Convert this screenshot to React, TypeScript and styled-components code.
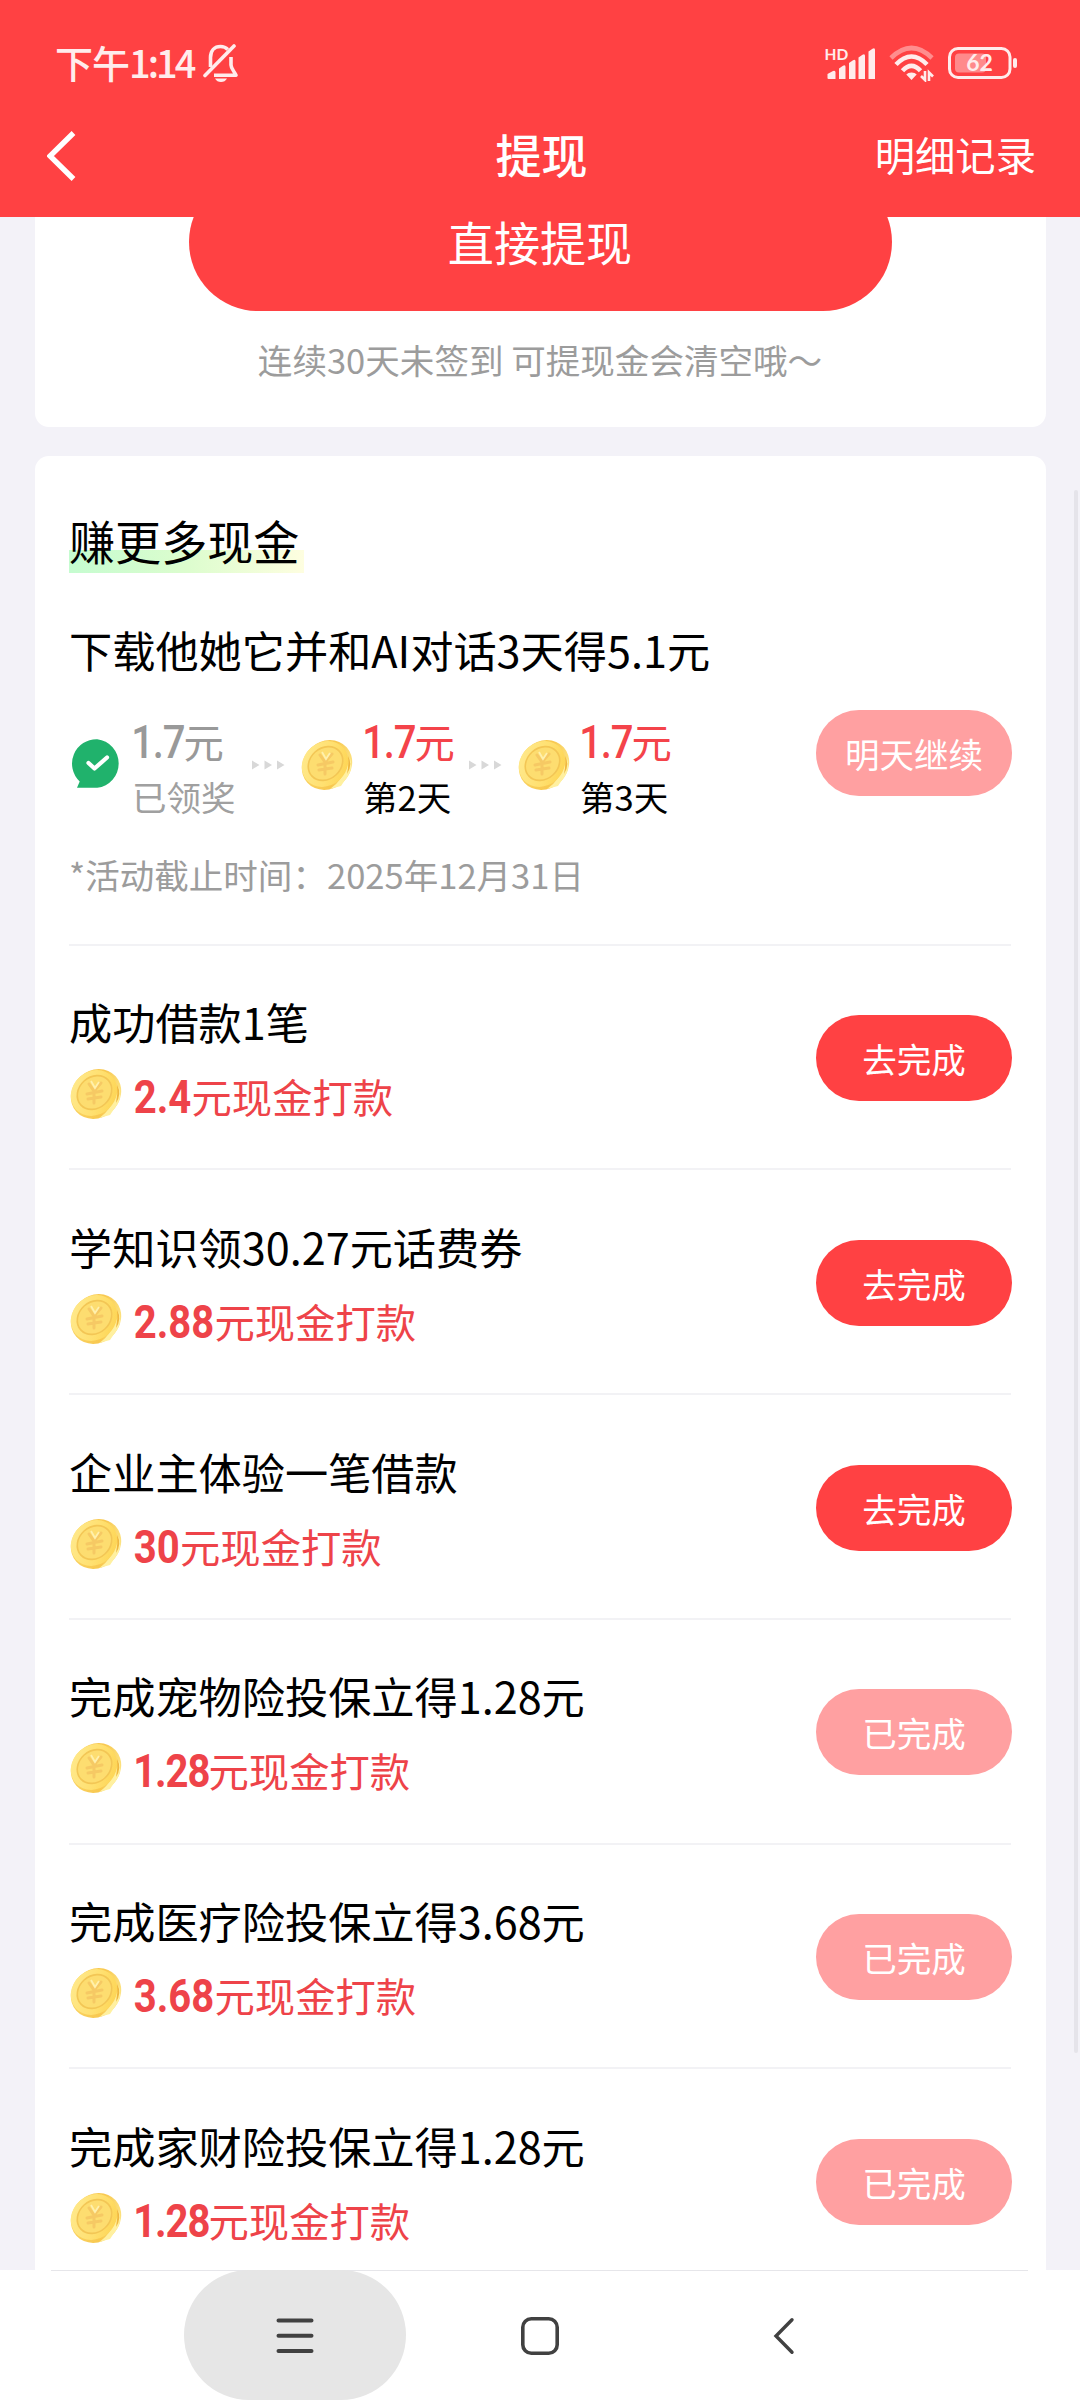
import React from "react";
import styled, { createGlobalStyle } from "styled-components";

const RED = "#ff4143";
const CJK = `"Noto Sans CJK SC", "Noto Sans", sans-serif`;

const GlobalStyle = createGlobalStyle`
  * { box-sizing: border-box; }
  html, body { margin: 0; padding: 0; }
  body { font-family: ${CJK}; color: #000; }
`;

const Screen = styled.div`
  width: 1080px;
  height: 2400px;
  display: flex;
  flex-direction: column;
  overflow: hidden;
  background: #f3f2f8;
`;

const Header = styled.header`
  height: 217px;
  flex: none;
  background: ${RED};
  color: #fff;
`;

const StatusBar = styled.div`
  height: 96px;
  padding: 30px 62px 0 55px;
  display: flex;
  align-items: center;
  justify-content: space-between;
  color: #ffecec;
`;

const StatusGroup = styled.div<{ $gap: number }>`
  display: flex;
  align-items: center;
  gap: ${(p) => p.$gap}px;
`;

const Clock = styled.span`
  padding-bottom: 3px;
  font-size: 38px;
  line-height: 40px;
  font-weight: 500;
  letter-spacing: -1px;
`;

const ClockDigits = styled.span`
  letter-spacing: -3px;
`;

const NavBar = styled.div`
  height: 121px;
  padding: 0 44px 0 47px;
  display: grid;
  grid-template-columns: 1fr auto 1fr;
  align-items: center;
`;

const BackIcon = styled.svg`
  display: block;
  width: 30px;
  height: 52px;
`;

const PageTitle = styled.h1`
  margin: 0;
  padding-bottom: 7px;
  font-size: 46px;
  line-height: 60px;
  font-weight: 500;
`;

const HeaderLink = styled.span`
  justify-self: end;
  padding-bottom: 6px;
  font-size: 40.32px;
  line-height: 60px;
`;

const Content = styled.main`
  position: relative;
  flex: 1;
  min-height: 0;
  overflow: hidden;
  padding: 0 34.5px;
  display: flex;
  flex-direction: column;
  gap: 29px;
`;

const WithdrawCard = styled.section`
  flex: none;
  height: 210px;
  background: #fff;
  border-radius: 0 0 14px 14px;
  display: flex;
  flex-direction: column;
  align-items: center;
`;

const WithdrawButton = styled.button`
  flex: none;
  width: 703px;
  height: 138px;
  margin-top: -44px;
  border: 0;
  border-radius: 69px;
  padding: 0 0 2px;
  background: ${RED};
  color: #fff;
  font-family: inherit;
  font-size: 46.08px;
  line-height: 48px;
`;

const Notice = styled.p`
  margin: 23px 0 0;
  font-size: 34.56px;
  line-height: 50px;
  color: #9c9c9c;
`;

const TaskCard = styled.section`
  flex: none;
  height: 1900px;
  padding: 57px 34.5px 0;
  background: #fff;
  border-radius: 14px 14px 0 0;
`;

const SectionTitle = styled.h2`
  margin: 0;
  width: 235px;
  height: 60px;
  font-size: 46.08px;
  line-height: 54px;
  font-weight: 400;
  background: linear-gradient(90deg, #c5fcd0, #dcfdce 50%, #fefee0) no-repeat 0 100% / 235px 23px;
`;

const FeaturedTask = styled.div`
  height: 372.5px;
  padding-top: 46px;
  border-bottom: 2px solid #f2f2f5;
`;

const TaskTitle = styled.h3`
  margin: 0;
  font-size: 43.2px;
  line-height: 60px;
  font-weight: 400;
`;

const StepLine = styled.div`
  display: flex;
  justify-content: space-between;
  margin-top: 31px;
`;

const Steps = styled.div`
  display: flex;
  align-items: flex-start;
`;

const Step = styled.div<{ $width: number }>`
  display: grid;
  grid-template-columns: 52px auto;
  column-gap: 12px;
  width: ${(p) => p.$width}px;
  & + svg + & {
    margin-left: 15px;
  }
`;

const IconSlot = styled.div`
  padding-top: 27px;
`;

const StepAmount = styled.div<{ $claimed?: boolean }>`
  display: flex;
  align-items: baseline;
  height: 56px;
  margin-top: 3px;
  line-height: 56px;
  font-size: 40.32px;
  color: ${(p) => (p.$claimed ? "#999" : "#f4434a")};
`;

const StepLabel = styled.div<{ $claimed?: boolean }>`
  margin: 2px 0 0 -1px;
  font-size: 34.56px;
  line-height: 50px;
  white-space: nowrap;
  color: ${(p) => (p.$claimed ? "#a0a0a0" : "#000")};
`;

const Arrows = styled.svg`
  width: 34px;
  height: 10px;
  margin: 50px 0 0;
`;

const Deadline = styled.p`
  margin: 28px 0 0;
  font-size: 34.56px;
  line-height: 50px;
  color: #9c9c9c;
`;

const TaskRow = styled.div`
  height: 224.75px;
  display: flex;
  justify-content: space-between;
  border-bottom: 2px solid #f2f2f5;
`;

const TaskInfo = styled.div`
  padding-top: 45.5px;
`;

const Reward = styled.div`
  display: flex;
  height: 60px;
  margin-top: 15px;
  line-height: 60px;
  font-size: 40.32px;
  color: #ee4349;
`;

const RewardText = styled.div`
  display: flex;
  align-items: baseline;
  margin-left: 12px;
`;

const Coin = styled.svg`
  display: block;
  flex: none;
  width: 54px;
  height: 54px;
`;

const Digits = styled.span<{ $width: number; $shift: number; $tracking: number; $weight: number }>`
  display: block;
  width: ${(p) => p.$width}px;
  text-indent: ${(p) => p.$shift}px;
  letter-spacing: ${(p) => p.$tracking}px;
  white-space: nowrap;
  font-family: Roboto, "Liberation Sans", sans-serif;
  font-size: 46px;
  font-weight: ${(p) => p.$weight};
  transform: scaleX(0.87);
  transform-origin: 0 50%;
`;

const ActionButton = styled.button<{ $muted?: boolean; $top: number }>`
  flex: none;
  width: 196px;
  height: 86px;
  margin: ${(p) => p.$top}px -1px 0 0;
  padding: 0;
  border: 0;
  border-radius: 43px;
  background: ${(p) => (p.$muted ? "#ffa0a1" : RED)};
  color: #fff;
  font-family: inherit;
  font-size: 34.56px;
`;

const ScrollThumb = styled.div`
  position: absolute;
  top: 273px;
  right: 2px;
  width: 4px;
  height: 1563px;
  border-radius: 2px;
  background: #e5e4ea;
`;

const SystemNav = styled.nav`
  flex: none;
  height: 130px;
  padding: 0 173px;
  background: #fff linear-gradient(#e6e6ea, #e6e6ea) no-repeat 51px 0 / 977px 1px;
  display: grid;
  grid-template-columns: repeat(3, 244.4px);
  justify-items: center;
`;

const NavKey = styled.div<{ $active?: boolean }>`
  width: 222px;
  height: 130px;
  border-radius: 65px;
  padding-top: 1px;
  background: ${(p) => (p.$active ? "#e6e6e6" : "transparent")};
  display: flex;
  align-items: center;
  justify-content: center;
`;

function Amount({ value, weight = 700 }: { value: string; weight?: number }) {
  const digits = value.replace(".", "").length;
  const startsWithOne = value.startsWith("1");
  const width = digits * 23 + (value.includes(".") ? 11.5 : 0) - 1 - (startsWithOne ? 6 : 0);
  return (
    <Digits
      $width={width}
      $shift={startsWithOne ? -2 : -1.5}
      $tracking={startsWithOne ? -1.3 : 0}
      $weight={weight}
    >
      {value}
    </Digits>
  );
}

function CoinIcon() {
  return (
    <Coin viewBox="0 -1 54 54">
      <defs>
        <linearGradient id="coinFace" x1="0.1" y1="0.1" x2="0.8" y2="1">
          <stop offset="0" stopColor="#ffe98c" />
          <stop offset="0.55" stopColor="#ffe070" />
          <stop offset="1" stopColor="#fdd452" />
        </linearGradient>
        <linearGradient id="coinEdge" x1="0" y1="0" x2="1" y2="1">
          <stop offset="0" stopColor="#fbd768" />
          <stop offset="0.6" stopColor="#f8c850" />
          <stop offset="1" stopColor="#fff09a" />
        </linearGradient>
      </defs>
      <ellipse cx="27" cy="27" rx="26.500" ry="23.500" transform="rotate(-42 27 27)" fill="url(#coinEdge)" />
      <path d="M50 20 Q54 32 45 42 L41 48 L30 51 Q44 42 50 20Z" fill="#fff0a0" />
      <path d="M48 18 Q53 27 47 36 Q49 27 48 18Z" fill="#f0b840" />
      <ellipse cx="25" cy="26" rx="24.500" ry="21.500" transform="rotate(-42 25 26)" fill="url(#coinFace)" />
      <ellipse cx="25.500" cy="25.500" rx="18.500" ry="15.500" transform="rotate(-42 25.5 25.5)" fill="#fddd70" stroke="#f3c655" strokeWidth="1.600" />
      <path d="M20 17 L25 24 L32 16 M25 24 L25 36 M18 27 L33 24 M19 32 L32 30" stroke="#f6c964" strokeWidth="3" strokeLinecap="round" fill="none" />
      <path d="M22 14 L26 21 L30 15" stroke="#fff0ad" strokeWidth="1.800" fill="none" />
    </Coin>
  );
}

function ClaimedIcon() {
  return (
    <Coin viewBox="-1 -0.5 54 54">
      <path d="M27.300 1.700 A24.500 24.500 0 0 1 27.300 50.300 H7 L9.700 44 A24.500 24.500 0 0 1 27.300 1.700Z" fill="#20b26c" />
      <path d="M18.500 25.500 L24.500 31 L37 20" fill="none" stroke="#fff" strokeWidth="4.200" strokeLinecap="round" strokeLinejoin="round" />
    </Coin>
  );
}

function ArrowTrail() {
  return (
    <Arrows viewBox="0 0 34 10">
      <path d="M1 0.500 L8.500 5 L1 9.500Z M13.500 0.500 L21 5 L13.500 9.500Z M26 0.500 L33.500 5 L26 9.500Z" fill="#d8d8d8" />
    </Arrows>
  );
}

function MutedBell() {
  return (
    <svg width="36" height="40" viewBox="0 0 36 40" fill="none" stroke="currentColor" strokeWidth="3.600">
      <path d="M7.500 24 V14.500 C7.500 7.500 11.500 3.500 17.500 3.500 C20.500 3.500 23 4.600 24.800 6.500" />
      <path d="M28 14 V22 C28 25.500 31 28 33 32.200 H11" strokeLinejoin="round" />
      <path d="M2 32.500 L31 3" strokeLinecap="round" />
      <path d="M12 35.500 H24 Q22 39 18 39 Q14 39 12 35.500Z" fill="currentColor" stroke="none" />
    </svg>
  );
}

function Signal() {
  return (
    <svg width="52" height="36" viewBox="0 0 52 36" fill="currentColor" overflow="visible">
      <text x="-0.500" y="14.500" fontFamily="Lato, sans-serif" fontSize="15.500" fontWeight="700">HD</text>
      <path d="M2.500 29 L8 26 Q10.500 25 10.500 27.500 V34 H3.500 Q2.500 34 2.500 33Z" />
      <path d="M14 23.500 L18 20.800 Q20.500 19.500 20.500 22 V34 H14Z" />
      <path d="M24 18 L28 15.300 Q30.500 14 30.500 16.500 V34 H24Z" />
      <path d="M33.500 12.500 L37.500 9.800 Q40 8.500 40 11 V34 H33.500Z" />
      <path d="M43.500 6.500 L47.500 3.800 Q50 2.500 50 5 V34 H43.500Z" />
    </svg>
  );
}

function Wifi() {
  return (
    <svg width="47" height="38" viewBox="0 0 47 38" fill="none" stroke="currentColor" strokeWidth="4.600">
      <path d="M2 14 Q22.500 -6 43 14" opacity="0.450" />
      <path d="M7 20.500 Q22.500 4.500 38 20.500" />
      <path d="M13.500 26.800 Q22.500 17 31.500 26.800" />
      <path d="M22.500 28.500 Q26 28.500 27.700 30.500 L22.500 36 L17.300 30.500 Q19 28.500 22.500 28.500Z" fill="currentColor" stroke="none" />
      <path d="M36 27 V36 L32 32 M40 37 V28.500 L44 32.500" strokeWidth="2.600" />
    </svg>
  );
}

function Battery() {
  return (
    <svg width="70" height="32" viewBox="0 0 70 32">
      <rect x="1.500" y="1.500" width="60.500" height="29" rx="8.500" fill="none" stroke="currentColor" strokeWidth="3" />
      <rect x="7" y="6.500" width="31" height="19" rx="4" fill="#ff8a8b" />
      <rect x="65" y="11" width="4" height="10" rx="2" fill="currentColor" />
      <text x="31.500" y="24" textAnchor="middle" fontFamily="Lato, sans-serif" fontSize="23" fontWeight="700" fill="currentColor">62</text>
    </svg>
  );
}

const steps = [
  { amount: "1.7", label: "已领奖", claimed: true, width: 182 },
  { amount: "1.7", label: "第2天", claimed: false, width: 168 },
  { amount: "1.7", label: "第3天", claimed: false, width: 160 },
];

const tasks = [
  { title: "成功借款1笔", amount: "2.4", done: false },
  { title: "学知识领30.27元话费券", amount: "2.88", done: false },
  { title: "企业主体验一笔借款", amount: "30", done: false },
  { title: "完成宠物险投保立得1.28元", amount: "1.28", done: true },
  { title: "完成医疗险投保立得3.68元", amount: "3.68", done: true },
  { title: "完成家财险投保立得1.28元", amount: "1.28", done: true },
];

export default function App() {
  return (
    <Screen>
      <GlobalStyle />
      <Header>
        <StatusBar>
          <StatusGroup $gap={10}>
            <Clock>下午<ClockDigits>1:14</ClockDigits></Clock>
            <MutedBell />
          </StatusGroup>
          <StatusGroup $gap={12}>
            <Signal />
            <Wifi />
            <Battery />
          </StatusGroup>
        </StatusBar>
        <NavBar>
          <BackIcon viewBox="0 0 30 52">
            <path d="M26.500 2 L3 25 L26.500 48" fill="none" stroke="#fff" strokeWidth="5.400" />
          </BackIcon>
          <PageTitle>提现</PageTitle>
          <HeaderLink>明细记录</HeaderLink>
        </NavBar>
      </Header>

      <Content>
        <WithdrawCard>
          <WithdrawButton>直接提现</WithdrawButton>
          <Notice>连续30天未签到 可提现金会清空哦～</Notice>
        </WithdrawCard>

        <TaskCard>
          <SectionTitle>赚更多现金</SectionTitle>
          <FeaturedTask>
            <TaskTitle>下载他她它并和AI对话3天得5.1元</TaskTitle>
            <StepLine>
              <Steps>
                {steps.map((step, i) => (
                  <React.Fragment key={step.label}>
                    {i > 0 && <ArrowTrail />}
                    <Step $width={step.width}>
                      <IconSlot>{step.claimed ? <ClaimedIcon /> : <CoinIcon />}</IconSlot>
                      <div>
                        <StepAmount $claimed={step.claimed}>
                          <Amount value={step.amount} weight={500} />元
                        </StepAmount>
                        <StepLabel $claimed={step.claimed}>{step.label}</StepLabel>
                      </div>
                    </Step>
                  </React.Fragment>
                ))}
              </Steps>
              <ActionButton $muted $top={0}>明天继续</ActionButton>
            </StepLine>
            <Deadline>*活动截止时间：2025年12月31日</Deadline>
          </FeaturedTask>

          {tasks.map((task) => (
            <TaskRow key={task.title}>
              <TaskInfo>
                <TaskTitle>{task.title}</TaskTitle>
                <Reward>
                  <CoinIcon />
                  <RewardText>
                    <Amount value={task.amount} />元现金打款
                  </RewardText>
                </Reward>
              </TaskInfo>
              <ActionButton $muted={task.done} $top={69.5}>
                {task.done ? "已完成" : "去完成"}
              </ActionButton>
            </TaskRow>
          ))}
        </TaskCard>
        <ScrollThumb />
      </Content>

      <SystemNav>
        <NavKey $active>
          <svg width="38" height="38" viewBox="0 0 38 38" stroke="#414141" strokeWidth="4" strokeLinecap="round">
            <path d="M2.500 3.500 H35.500 M2.500 18.800 H35.500 M2.500 34.100 H35.500" />
          </svg>
        </NavKey>
        <NavKey>
          <svg width="40" height="40" viewBox="0 0 40 40" fill="none" stroke="#414141" strokeWidth="3.600">
            <rect x="2.800" y="2.800" width="34.400" height="34.400" rx="8.500" />
          </svg>
        </NavKey>
        <NavKey>
          <svg width="22" height="38" viewBox="0 0 22 38" fill="none" stroke="#414141" strokeWidth="3.400" strokeLinecap="round">
            <path d="M19 2.800 L3 19 L19 35.200" />
          </svg>
        </NavKey>
      </SystemNav>
    </Screen>
  );
}
